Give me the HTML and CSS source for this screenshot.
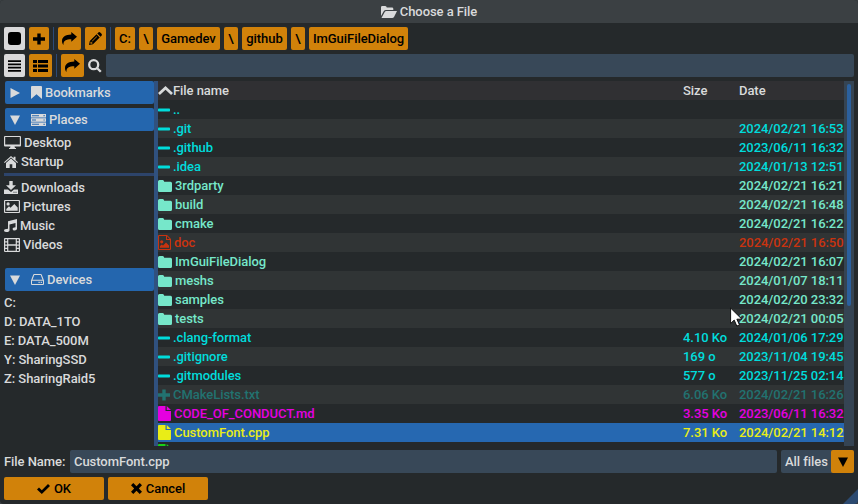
FILE: index.html
```html
<!DOCTYPE html>
<html lang="en">
<head>
<meta charset="utf-8">
<title>Choose a File</title>
<link rel="stylesheet" href="styles.css">
</head>
<body>
<svg class="sprite" aria-hidden="true">
  <symbol id="share" viewBox="0 0 15 13"><path d="M15 4.800 9.300 0v2.600C3.500 2.700 0 5 0 9c0 1.700.5 3 1.500 4C1.200 8.700 4 7.200 9.300 7.200v2.600z"/></symbol>
  <symbol id="folder" viewBox="0 0 14 12"><path d="M0 1.500Q0 0 1.500 0h3.200Q6 0 6.200 1.700h6.300Q14 1.700 14 3.200v7.200Q14 12 12.500 12h-11Q0 12 0 10.500z"/></symbol>
  <symbol id="dash" viewBox="0 0 12 12"><rect y="4.500" width="12" height="3" rx=".7"/></symbol>
  <symbol id="plus" viewBox="0 0 12 12"><path d="M4.300.5h3.400v3.800H12v3.400H7.700v3.800H4.300V7.700H0V4.300h4.300z"/></symbol>
  <symbol id="file" viewBox="0 0 13 15"><path d="M0 1Q0 0 1 0h6.500v5H13v9q0 1-1 1H1q-1 0-1-1zM8.700 0 13 4H8.700z"/></symbol>
  <symbol id="tri-down" viewBox="0 0 10 10"><path d="M0 .5h10L5 10z"/></symbol>
</svg>
<div class="dialog">
  <header class="title">
    <svg width="16" height="12" viewBox="0 0 16 12"><path d="M0 10V1.300Q0 0 1.300 0h3Q5.500 0 5.800 1.500H11q1.300 0 1.300 1.300V4H5Q3.600 4 2.700 5.200zM.5 12 3.700 6Q4.300 5 5.300 5H16l-3 6q-.6 1-1.800 1z"/></svg>
    <span>Choose a File</span>
  </header>

  <div class="toolbar">
    <button class="btn w21 light"><svg width="13" height="13" viewBox="0 0 13 13"><rect width="13" height="13" rx="3"/></svg></button>
    <button class="btn w20"><svg width="12" height="12"><use href="#plus"/></svg></button>
    <i class="sep"></i>
    <button class="btn w23"><svg width="15" height="13"><use href="#share"/></svg></button>
    <button class="btn w21"><svg width="13" height="13" viewBox="0 0 13 13"><path fill-rule="evenodd" d="m0 13 .8-4L7.500 2.300l3.200 3.200L4 12.200zm1.700-3.300-.4 1.500.6.600 1.500-.4v-1H2.500v-.7zM3 9l4.700-4.700.4.400L3.400 9.400zM8.300 1.500 9.300.5q1-.8 1.900 0l1.300 1.300q.8.900 0 1.900l-1 1z"/></svg></button>
    <i class="sep"></i>
    <button class="btn w20">C:</button>
    <button class="btn w14">\</button>
    <button class="btn w63">Gamedev</button>
    <button class="btn w14">\</button>
    <button class="btn w45">github</button>
    <button class="btn w14">\</button>
    <button class="btn w99">ImGuiFileDialog</button>
  </div>

  <div class="toolbar">
    <button class="btn w21 light"><svg width="13" height="12" viewBox="0 0 13 12"><path d="M0 .2h13v1.700H0zM0 3.500h13v1.700H0zM0 6.800h13v1.700H0zM0 10.100h13v1.700H0z"/></svg></button>
    <button class="btn w23"><svg width="15" height="12" viewBox="0 0 15 12"><path d="M0 0h4v3H0zM5 0h10v3H5zM0 4.500h4v3H0zM5 4.500h10v3H5zM0 9h4v3H0zM5 9h10v3H5z"/></svg></button>
    <i class="sep"></i>
    <button class="btn w23"><svg width="15" height="13"><use href="#share"/></svg></button>
    <svg class="lens" width="14" height="14" viewBox="0 0 14 14"><circle cx="5.700" cy="5.700" r="4.500"/><path d="m9.200 9.200 3.600 3.600"/></svg>
    <div class="field grow"></div>
  </div>

  <main class="body">
    <aside class="side">
      <div class="head"><svg class="arrow" width="10" height="10" viewBox="0 0 10 10"><path d="M.5 0 10 5 .5 10z"/></svg><svg width="11" height="13" viewBox="0 0 11 13"><path d="M0 1q0-1 1-1h9q1 0 1 1v12L5.500 8.300 0 13z"/></svg><span>Bookmarks</span></div>
      <div class="head"><svg class="arrow" width="10" height="10"><use href="#tri-down"/></svg><svg width="15" height="12" viewBox="0 0 15 12"><path fill-rule="evenodd" d="M0 0h15v3.400H0zM0 4.300h15v3.400H0zM0 8.600h15V12H0zM1 1.200v1h7v-1zM1 5.500v1h4v-1zM1 9.800v1h7v-1zM12.500 1.100v1.200h1.200V1.100zM12.500 5.400v1.200h1.200V5.400zM12.500 9.700v1.200h1.200V9.700z"/></svg><span>Places</span></div>
      <div class="item first"><svg width="17" height="13" viewBox="0 0 17 13"><path fill-rule="evenodd" d="M1 0h15q1 0 1 1v8.500q0 1-1 1h-5.500l.5 1.500h1v1H5v-1h1l.5-1.500H1q-1 0-1-1V1q0-1 1-1zm.2 1.100v7.500h14.600V1.100z"/></svg><span>Desktop</span></div>
      <div class="item"><svg width="14" height="12" viewBox="0 0 14 12"><path d="M0 6.200 7 0l2.600 2.300V.7h1.900V4L14 6.200l-.7.800L7 1.600.7 7zM2 6.900l5-4.300 5 4.300V12H8.300V8.300H5.700V12H2z"/></svg><span>Startup</span></div>
      <hr class="rule">
      <div class="item"><svg width="14" height="13" viewBox="0 0 14 13"><path fill-rule="evenodd" d="M5.300 0h3.400v4.200H12L7 9 2 4.200h3.300zM0 8.500h4L7 11l3-2.500h4V13H0zm9.500 2.300v1h1v-1zm2 0v1h1v-1z"/></svg><span>Downloads</span></div>
      <div class="item"><svg width="16" height="13" viewBox="0 0 16 13"><path fill-rule="evenodd" d="M1 0h14q1 0 1 1v11q0 1-1 1H1q-1 0-1-1V1q0-1 1-1zm.2 1.100v10.800h13.600V1.100zM2.300 10.800V9L5 6.300l1.500 1.500L10.300 4l3.400 3.500v3.300z"/><circle cx="4.100" cy="3.900" r="1.600"/></svg><span>Pictures</span></div>
      <div class="item"><svg width="13" height="13" viewBox="0 0 13 13"><path d="M4 2.200 13 0v9.700q0 1.800-2.400 1.800-2 0-2-1.500 0-1.700 2.900-1.700V4L5.500 5.500v5.700Q5.500 13 2.500 13 0 13 0 11.400q0-1.700 4-1.700z"/></svg><span>Music</span></div>
      <div class="item"><svg width="16" height="14" viewBox="0 0 16 14"><path fill-rule="evenodd" d="M1 0h14q1 0 1 1v12q0 1-1 1H1q-1 0-1-1V1q0-1 1-1zm.2 1.300v2h1.900v-2zm0 3.200v2h1.900v-2zm0 3.200v2h1.900v-2zm0 3.200v2h1.900v-2zM4.300 1.300v5h7.400v-5zm0 6.400v5h7.400v-5zM12.900 1.300v2h1.900v-2zm0 3.200v2h1.900v-2zm0 3.200v2h1.900v-2zm0 3.200v2h1.900v-2z"/></svg><span>Videos</span></div>
      <div class="head devices"><svg class="arrow" width="10" height="10"><use href="#tri-down"/></svg><svg width="13" height="11" viewBox="0 0 13 11"><path fill-rule="evenodd" d="M3.200 0h6.600q.8 0 1 .8L13 6.500V10q0 1-1 1H1q-1 0-1-1V6.500L2.200.8q.2-.8 1-.8zm.1 1L1.500 5.800h10L9.700 1zM1 6.800V10h11V6.800zm6.500 1h1.200V9H7.500zm2.200 0h1.200V9H9.700z"/></svg><span>Devices</span></div>
      <div class="item first">C:</div>
      <div class="item">D: DATA_1TO</div>
      <div class="item">E: DATA_500M</div>
      <div class="item">Y: SharingSSD</div>
      <div class="item">Z: SharingRaid5</div>
    </aside>
    <div class="splitter"></div>
    <section class="table">
      <div class="row thead"><div class="name"><svg width="15" height="9" viewBox="0 0 15 9"><path d="M7.500 0 15 7l-1.900 1.900L7.500 3.700 1.900 8.900 0 7z"/></svg><span>File name</span></div><div>Size</div><div>Date</div></div>
      <div class="row cyan"><div class="name"><svg width="12" height="12"><use href="#dash"/></svg><span>..</span></div><div></div><div></div></div>
      <div class="row cyan"><div class="name"><svg width="12" height="12"><use href="#dash"/></svg><span>.git</span></div><div></div><div>2024/02/21 16:53</div></div>
      <div class="row cyan"><div class="name"><svg width="12" height="12"><use href="#dash"/></svg><span>.github</span></div><div></div><div>2023/06/11 16:32</div></div>
      <div class="row cyan"><div class="name"><svg width="12" height="12"><use href="#dash"/></svg><span>.idea</span></div><div></div><div>2024/01/13 12:51</div></div>
      <div class="row mint"><div class="name"><svg width="14" height="12"><use href="#folder"/></svg><span>3rdparty</span></div><div></div><div>2024/02/21 16:21</div></div>
      <div class="row mint"><div class="name"><svg width="14" height="12"><use href="#folder"/></svg><span>build</span></div><div></div><div>2024/02/21 16:48</div></div>
      <div class="row mint"><div class="name"><svg width="14" height="12"><use href="#folder"/></svg><span>cmake</span></div><div></div><div>2024/02/21 16:22</div></div>
      <div class="row red"><div class="name"><svg width="13" height="15" viewBox="0 0 13 15"><path fill-rule="evenodd" d="M1 0h8l4 4v10q0 1-1 1H1q-1 0-1-1V1q0-1 1-1zm.1 1.100v12.800h10.800V5H8V1.100zM9 1.300V4h2.700zM2 12.800V11l1.800-1.600 1.200 1L8 7.500l3 3v2.300z"/><circle cx="3.700" cy="6.800" r="1.600"/></svg><span>doc</span></div><div></div><div>2024/02/21 16:50</div></div>
      <div class="row mint"><div class="name"><svg width="14" height="12"><use href="#folder"/></svg><span>ImGuiFileDialog</span></div><div></div><div>2024/02/21 16:07</div></div>
      <div class="row mint"><div class="name"><svg width="14" height="12"><use href="#folder"/></svg><span>meshs</span></div><div></div><div>2024/01/07 18:11</div></div>
      <div class="row mint"><div class="name"><svg width="14" height="12"><use href="#folder"/></svg><span>samples</span></div><div></div><div>2024/02/20 23:32</div></div>
      <div class="row mint"><div class="name"><svg width="14" height="12"><use href="#folder"/></svg><span>tests</span></div><div></div><div>2024/02/21 00:05</div></div>
      <div class="row cyan"><div class="name"><svg width="12" height="12"><use href="#dash"/></svg><span>.clang-format</span></div><div>4.10 Ko</div><div>2024/01/06 17:29</div></div>
      <div class="row cyan"><div class="name"><svg width="12" height="12"><use href="#dash"/></svg><span>.gitignore</span></div><div>169 o</div><div>2023/11/04 19:45</div></div>
      <div class="row cyan"><div class="name"><svg width="12" height="12"><use href="#dash"/></svg><span>.gitmodules</span></div><div>577 o</div><div>2023/11/25 02:14</div></div>
      <div class="row teal"><div class="name"><svg width="12" height="12"><use href="#plus"/></svg><span>CMakeLists.txt</span></div><div>6.06 Ko</div><div>2024/02/21 16:26</div></div>
      <div class="row magenta"><div class="name"><svg width="13" height="15"><use href="#file"/></svg><span>CODE_OF_CONDUCT.md</span></div><div>3.35 Ko</div><div>2023/06/11 16:32</div></div>
      <div class="row yellow selected"><div class="name"><svg width="13" height="15"><use href="#file"/></svg><span>CustomFont.cpp</span></div><div>7.31 Ko</div><div>2024/02/21 14:12</div></div>
      <div class="row green"><div class="name"><svg width="13" height="15"><use href="#file"/></svg></div><div></div><div></div></div>
    </section>
    <div class="scroll"><div class="grab"></div></div>
  </main>

  <div class="toolbar filebar">
    <label class="label">File Name:</label>
    <div class="field grow">CustomFont.cpp</div>
    <div class="combo"><span>All files</span><button class="btn w23"><svg width="10" height="10"><use href="#tri-down"/></svg></button></div>
  </div>
  <div class="toolbar">
    <button class="btn w100"><svg width="13" height="10" viewBox="0 0 13 10"><path d="m0 5.500 2-2 2.800 2.700L11 0l2 2-8.200 8z"/></svg><span>OK</span></button>
    <button class="btn w100"><svg width="11" height="11" viewBox="0 0 11 11"><path d="M2.300 0 5.500 3.200 8.700 0 11 2.300 7.800 5.500 11 8.700 8.700 11 5.500 7.800 2.300 11 0 8.700l3.200-3.200L0 2.300z"/></svg><span>Cancel</span></button>
  </div>
  <div class="grip"></div>
  <svg class="cursor" width="14" height="21" viewBox="0 0 14 21"><path d="M.6 1v15.500l3.600-3.400 2.600 6 2.700-1.200-2.600-5.700h5z"/></svg>
</div>
</body>
</html>
```
FILE: styles.css
```css
* { box-sizing: border-box; }
body {
  margin: 0;
  width: 858px;
  height: 504px;
  overflow: hidden;
  background: #3b4043;
  color: #d9dadb;
  font: 500 13px/19px Roboto, sans-serif;
  letter-spacing: -.06px;
  white-space: nowrap;
}
svg { display: block; flex: none; fill: currentColor; }
.sprite { position: absolute; width: 0; height: 0; }

.dialog {
  position: relative;
  display: flex;
  flex-direction: column;
  gap: 4px;
  width: 858px;
  height: 504px;
  background: #25292b;
  border-radius: 4px;
  overflow: hidden;
}
.title {
  display: flex;
  align-items: center;
  justify-content: center;
  gap: 3px;
  height: 23px;
  background: #3b4043;
}

.toolbar { display: flex; gap: 4px; height: 23px; padding: 0 4px; }
.sep { width: 1px; height: 23px; background: #2c4a78; }
.btn {
  display: flex;
  flex: none;
  align-items: center;
  justify-content: center;
  gap: 4px;
  height: 23px;
  padding: 0;
  border: 0;
  border-radius: 2px;
  background: #d1820a;
  color: #000;
  font: inherit;
  letter-spacing: inherit;
}
.light { background: #d9d9da; }
.w14 { width: 14px; }
.w20 { width: 20px; }
.w21 { width: 21px; }
.w23 { width: 23px; }
.w45 { width: 45px; }
.w63 { width: 63px; }
.w99 { width: 99px; }
.w100 { width: 100px; }
.lens { align-self: center; fill: none; stroke: #d9dadb; stroke-width: 2.300; }
.field {
  height: 23px;
  padding: 2px 4px;
  border-radius: 2px;
  background: #384858;
}
.grow { flex: 1; }

.body { display: flex; height: 365px; padding: 0 4px; }
.side { width: 150px; overflow: hidden; }
.head {
  display: flex;
  align-items: center;
  gap: 3px;
  height: 23px;
  margin: 0 0 4px 1px;
  padding-left: 5px;
  border-radius: 2px;
  background: #2466ae;
}
.arrow { margin-right: 8px; }
.item { display: flex; align-items: center; gap: 3px; height: 19px; }
.first { margin-top: -2px; }
.rule { height: 3px; margin: 2px 0; border: 0; background: #2d446b; }
.devices { margin-top: 14px; }
.splitter { width: 4px; background: #30517f; }

.table { flex: 1; overflow: hidden; }
.row {
  display: grid;
  grid-template-columns: 525px 56px 105px;
  height: 19px;
}
.row:nth-child(odd) { background: #303435; }
.row.thead { background: #303033; }
.row.selected { background: #2668b1; }
.name { display: flex; align-items: center; gap: 3px; }
.thead .name { gap: 0; }
.cyan { color: #00dcdc; }
.mint { color: #76e7ca; }
.red { color: #c9330f; }
.teal { color: #227270; }
.magenta { color: #e500e0; }
.yellow { color: #e9ed17; }
.green { color: #19d119; }

.scroll { width: 10px; padding: 3px; background: #354453; }
.grab { width: 4px; height: 222px; border-radius: 2px; background: #2b609e; }

.label { width: 62px; padding-top: 2px; }
.combo {
  display: flex;
  width: 73px;
  padding-left: 4px;
  line-height: 23px;
  justify-content: space-between;
  border-radius: 2px;
  background: #384858;
}
.grip {
  position: absolute;
  right: 0;
  bottom: 0;
  width: 15px;
  height: 15px;
  background: #2c4a70;
  clip-path: polygon(100% 0, 100% 100%, 0 100%);
}
.cursor {
  position: absolute;
  left: 730px;
  top: 307px;
  fill: #fff;
  stroke: #111;
  stroke-width: 1;
}
```
